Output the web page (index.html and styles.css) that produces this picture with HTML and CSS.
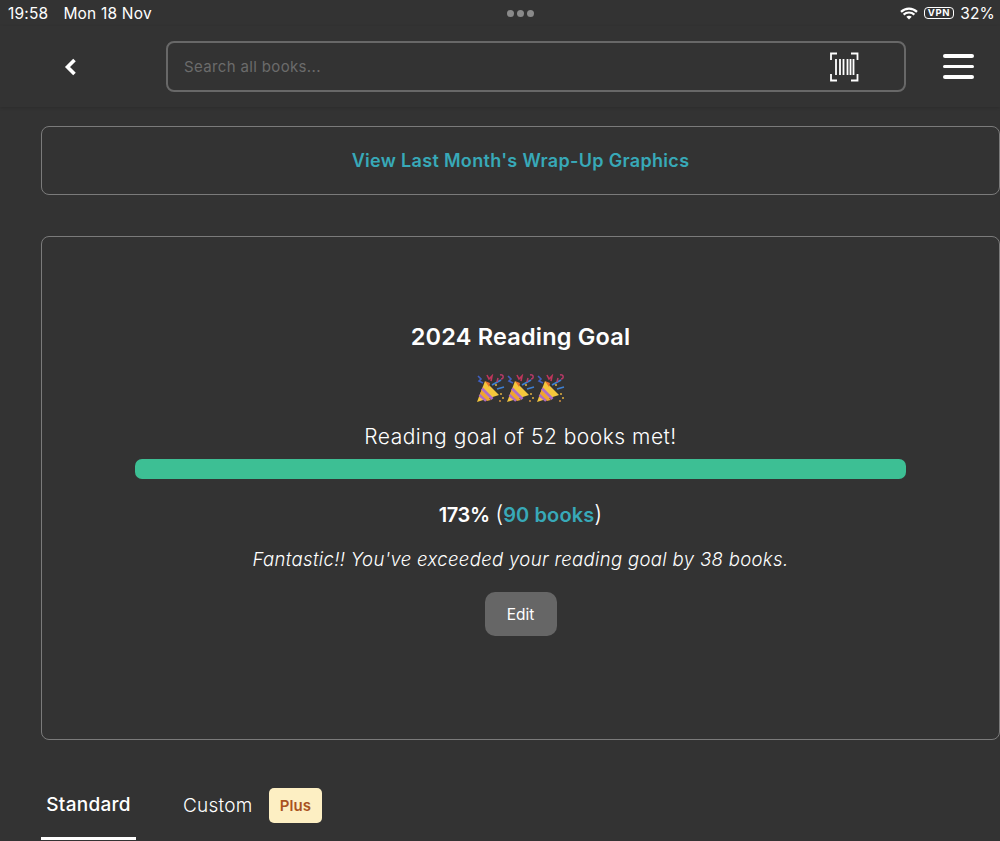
FILE: index.html
```html
<!DOCTYPE html>
<html lang="en">
<head>
    <meta charset="UTF-8">
    <meta name="viewport" content="width=device-width, initial-scale=1.0">
    <title>2024 Reading Goal</title>
    <link rel="stylesheet" href="styles.css">
</head>
<body>
    <svg class="defs" width="0" height="0">
        <symbol id="popper" viewBox="0 0 30 30">
            <path d="M1 28 L9 7 L23 21 Z" fill="#f4c53c"/>
            <path d="M5.5 16 L15 26 L11 27 L3.6 21 Z" fill="#efa52e"/>
            <path d="M6 14.5 L16.5 25" stroke="#b06cc4" stroke-width="2.6" fill="none"/>
            <path d="M3.4 21 L10 26.8" stroke="#b06cc4" stroke-width="2.4" fill="none"/>
            <path d="M9 7 L14 9 L13 13 Z" fill="#e8742c"/>
            <path d="M2 2 L5 5 L3 7 L7 9" stroke="#3f5fc0" stroke-width="1.6" fill="none"/>
            <path d="M11 1 L13 5 L16 2 L15 7" stroke="#c0365c" stroke-width="1.6" fill="none"/>
            <path d="M16 11 L25 6" stroke="#3f7fd0" stroke-width="1.8" fill="none"/>
            <path d="M24 1 C28 0 28 5 25 5 M22 4 L21 8" stroke="#b83a68" stroke-width="1.5" fill="none"/>
            <path d="M21 15 L28 13" stroke="#3f7fd0" stroke-width="1.6" fill="none"/>
            <circle cx="25" cy="20" r="1" fill="#e0b040"/>
            <circle cx="27" cy="24" r="1" fill="#e0b040"/>
            <circle cx="24" cy="27" r="1" fill="#d09040"/>
            <circle cx="20" cy="11" r="1" fill="#e0b040"/>
        </symbol>
    </svg>

    <div class="status-bar">
        <div class="status-left">
            <span>19:58</span>
            <span>Mon 18 Nov</span>
        </div>
        <div class="status-dots"><i></i><i></i><i></i></div>
        <div class="status-right">
            <svg class="wifi" width="18" height="13" viewBox="0 0 18 13">
                <path d="M9 12.6 L6.3 9.7 C7.8 8.4 10.2 8.4 11.7 9.7 Z" fill="#fff"/>
                <path d="M1 4.9 C5.5 .6 12.5 .6 17 4.9 M3.6 7.6 C6.7 4.8 11.3 4.8 14.4 7.6" stroke="#fff" stroke-width="2.2" fill="none"/>
            </svg>
            <span class="vpn">VPN</span>
            <span>32%</span>
        </div>
    </div>

    <header class="top-bar">
        <button class="back-button" aria-label="Back">
            <svg width="14" height="18" viewBox="0 0 14 18">
                <path d="M11.5 2 L4.5 9 L11.5 16" stroke="#fff" stroke-width="3.6" fill="none"/>
            </svg>
        </button>
        <div class="search-box">
            <span class="search-placeholder">Search all books...</span>
            <svg class="barcode" width="30" height="30" viewBox="0 0 30 30">
                <path d="M2 8 V1.5 H8 M22 1.5 H28.5 V8 M2 22 V28.5 H8 M22 28.5 H28.5 V22" stroke="#fff" stroke-width="1.8" fill="none"/>
                <path d="M7 7 V23 M11 7 V23 M14.5 7 V23 M18.5 7 V23 M21.5 7 V23 M24.5 7 V23" stroke="#fff" stroke-width="1.8" fill="none"/>
            </svg>
        </div>
        <button class="menu-button" aria-label="Menu"><i></i><i></i><i></i></button>
    </header>

    <main class="content">
        <a class="wrapup-card" href="#">View Last Month's Wrap-Up Graphics</a>

        <section class="goal-card">
            <h2 class="goal-title">2024 Reading Goal</h2>
            <div class="goal-emoji">
                <svg width="30" height="30"><use href="#popper"/></svg>
                <svg width="30" height="30"><use href="#popper"/></svg>
                <svg width="30" height="30"><use href="#popper"/></svg>
            </div>
            <p class="goal-met">Reading goal of 52 books met!</p>
            <div class="progress-track"><div class="progress-fill" style="width: 100%"></div></div>
            <p class="goal-percent"><strong class="percent">173%</strong> <span class="paren">(</span><strong class="teal">90 books</strong><span class="paren">)</span></p>
            <p class="goal-note">Fantastic!! You've exceeded your reading goal by 38 books.</p>
            <button class="edit-button">Edit</button>
        </section>

        <nav class="tabs">
            <a class="tab active" href="#">Standard</a>
            <a class="tab custom" href="#">Custom</a>
            <span class="plus-badge">Plus</span>
        </nav>
    </main>
</body>
</html>
```

FILE: styles.css
```css
html, body {
    height: 841px;
    overflow: hidden;
}
body {
    margin: 0;
    background-color: #333333;
    color: #ffffff;
    font-family: Inter, "Liberation Sans", sans-serif;
}
.defs {
    display: block;
    height: 0;
}
.status-bar {
    display: grid;
    grid-template-columns: 499px auto 1fr;
    align-items: center;
    height: 26px;
    padding: 0 5px 0 8px;
    font-size: 15.5px;
    letter-spacing: 0.2px;
}
.status-left {
    display: flex;
    gap: 15px;
}
.status-right {
    display: flex;
    justify-content: flex-end;
    align-items: center;
    gap: 6px;
}
.status-dots {
    display: flex;
    gap: 3px;
}
.status-dots i {
    width: 7px;
    height: 7px;
    border-radius: 50%;
    background-color: #8a8a8a;
}
.vpn {
    border: 1.5px solid #fff;
    border-radius: 4px;
    padding: 0 3px;
    font-size: 9.5px;
    font-weight: 700;
    line-height: 10px;
    letter-spacing: 0.6px;
}
.top-bar {
    display: flex;
    align-items: center;
    height: 81px;
    box-sizing: border-box;
    padding: 0 24px 0 63px;
    box-shadow: 0 1px 3px rgba(0, 0, 0, 0.14);
}
.back-button, .menu-button {
    background: none;
    border: none;
    padding: 0;
    cursor: pointer;
}
.back-button {
    display: flex;
    width: 103px;
}
.search-box {
    display: flex;
    align-items: center;
    justify-content: space-between;
    width: 740px;
    height: 51px;
    box-sizing: border-box;
    padding: 0 45px 0 16px;
    border: 2px solid #686868;
    border-radius: 8px;
}
.search-placeholder {
    color: #6b6b6b;
    font-size: 15px;
    letter-spacing: 0.35px;
}
.menu-button {
    display: flex;
    flex-direction: column;
    gap: 7px;
    margin-left: 37px;
}
.menu-button i {
    display: block;
    width: 31px;
    height: 3.5px;
    border-radius: 2px;
    background-color: #fff;
}
.content {
    padding: 19px 0 0 41px;
}
.wrapup-card {
    display: flex;
    align-items: center;
    justify-content: center;
    height: 69px;
    box-sizing: border-box;
    border: 1px solid #7b7b7b;
    border-radius: 8px;
    color: #38a9b8;
    font-size: 18px;
    font-weight: 600;
    letter-spacing: 0.32px;
    text-decoration: none;
}
.goal-card {
    display: flex;
    flex-direction: column;
    align-items: center;
    height: 504px;
    box-sizing: border-box;
    margin-top: 41px;
    padding-top: 84px;
    border: 1px solid #7b7b7b;
    border-radius: 8px;
}
.goal-title {
    margin: 0;
    font-size: 23.5px;
    font-weight: 600;
    letter-spacing: 0.2px;
    line-height: 32px;
}
.goal-emoji {
    display: flex;
    height: 30px;
    margin-top: 21px;
}
.goal-met {
    margin: 19px 0 0;
    font-size: 21px;
    font-weight: 300;
    letter-spacing: 0.5px;
    line-height: 28px;
}
.progress-track {
    width: 771px;
    height: 20px;
    margin-top: 8px;
    border-radius: 7px;
    background-color: #555;
    overflow: hidden;
}
.progress-fill {
    height: 100%;
    background-color: #3dbf94;
}
.goal-percent {
    margin: 21px 0 0;
    font-size: 20px;
    font-weight: 300;
    line-height: 30px;
}
.goal-percent strong {
    font-weight: 600;
}
.percent {
    letter-spacing: -0.4px;
}
.paren {
    font-size: 23px;
    line-height: 1;
}
.teal {
    color: #38a9b8;
    letter-spacing: 0.1px;
}
.goal-note {
    margin: 16px 0 0;
    font-size: 18.5px;
    font-style: italic;
    font-weight: 300;
    letter-spacing: 0.35px;
    line-height: 26px;
}
.edit-button {
    width: 72px;
    height: 44px;
    margin-top: 20px;
    border: none;
    border-radius: 10px;
    background-color: #666666;
    color: #fff;
    font-family: inherit;
    font-size: 15.5px;
    font-weight: 400;
}
.tabs {
    display: flex;
    height: 100px;
}
.tab {
    display: flex;
    align-items: center;
    justify-content: center;
    height: 100%;
    padding-top: 31px;
    color: #fff;
    font-size: 19px;
    font-weight: 300;
    letter-spacing: 0.25px;
    text-decoration: none;
    box-sizing: border-box;
}
.tab.active {
    width: 95px;
    padding-top: 32px;
    font-weight: 500;
    border-bottom: 3px solid #fff;
}
.tab.custom {
    margin-left: 47px;
}
.plus-badge {
    align-self: center;
    margin: 31px 0 0 16px;
    padding: 8px 11px;
    border-radius: 5px;
    background-color: #fdefc3;
    color: #a9531f;
    font-size: 15px;
    font-weight: 600;
    letter-spacing: 0.1px;
}
```
